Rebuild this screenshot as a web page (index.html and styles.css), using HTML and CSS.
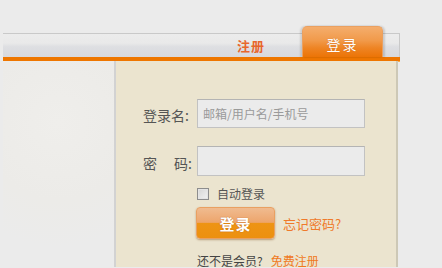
FILE: index.html
```html
<!DOCTYPE html>
<html lang="zh-CN">
<head>
<meta charset="utf-8">
<title>登录</title>
<link rel="stylesheet" href="styles.css">
</head>
<body>
<div class="page">
  <div class="bar">
    <a class="reg-link" href="#">注册</a>
    <div class="tab">登录</div>
  </div>
  <div class="main">
    <div class="side"></div>
    <div class="panel">
      <div class="row">
        <label class="lbl">登录名:</label>
        <input class="field" type="text" placeholder="邮箱/用户名/手机号">
      </div>
      <div class="row row-pw">
        <label class="lbl">密<span class="sp"></span>码:</label>
        <input class="field" type="password">
      </div>
      <div class="row row-check">
        <input class="check" type="checkbox">
        <span class="check-text">自动登录</span>
      </div>
      <div class="row row-btn">
        <button class="btn">登录</button>
        <a class="forgot" href="#">忘记密码?</a>
      </div>
      <div class="row row-join">
        <span class="join-text">还不是会员?</span>
        <a class="join-link" href="#">免费注册</a>
      </div>
    </div>
  </div>
</div>
</body>
</html>
```
FILE: styles.css
```css
html, body {
  margin: 0;
  padding: 0;
  background: #ebebeb;
  font-family: "Noto Sans CJK SC", "Noto Sans", sans-serif;
}
.page {
  width: 397px;
  margin-left: 3px;
  padding-top: 33px;
}
.bar {
  height: 23px;
  border-top: 1px solid #c9c9c9;
  border-right: 1px solid #c9c9c9;
  background: linear-gradient(#ececec 0%, #e9e9e9 40%, #dedfe2 55%, #d8d9dd 100%);
  display: flex;
  justify-content: flex-end;
  align-items: flex-end;
}
.reg-link {
  align-self: center;
  margin-right: 37px;
  font-size: 13px;
  font-weight: bold;
  color: #e8662c;
  text-decoration: none;
  line-height: 16px;
  padding-top: 1px;
  letter-spacing: 1px;
}
.tab {
  width: 81px;
  height: 31px;
  margin-right: 16px;
  box-sizing: border-box;
  border: 1px solid #eaa060;
  border-bottom: none;
  border-radius: 5px 5px 0 0;
  background: linear-gradient(#f4ad6c 0%, #f19a4a 45%, #ee8424 70%, #ec7406 100%);
  box-shadow: -2px 0 2px rgba(0,0,0,0.12), 2px 0 2px rgba(0,0,0,0.14);
  color: #fff;
  font-size: 14px;
  text-align: center;
  line-height: 30px;
  padding-top: 2px;
  letter-spacing: 2px;
  text-shadow: 0 0 1px rgba(160,70,0,0.5);
}
.main {
  display: flex;
  border-top: 4px solid #ee7600;
  box-shadow: inset 0 1px 0 #f4b050;
  height: 206px;
}
.side {
  width: 111px;
  border-right: 2px solid #d2d2d2;
  background: radial-gradient(circle at 50% 30%, #efeeeb 0%, #ecebe8 50%, #ebebeb 80%);
}
.panel {
  width: 282px;
  border-right: 2px solid #cdc8b6;
  background: #ebe4cf;
  padding-top: 38px;
  box-sizing: border-box;
}
.row {
  display: flex;
  align-items: center;
  padding-left: 81px;
}
.row:first-child, .row-pw {
  padding-left: 27px;
}
.lbl {
  width: 54px;
  font-size: 14px;
  color: #555;
  padding-top: 3px;
  white-space: nowrap;
}
.sp {
  display: inline-block;
  width: 17px;
}
.field {
  width: 168px;
  height: 29px;
  box-sizing: border-box;
  margin: 0;
  border: 1px solid #c2c2c2;
  border-top-color: #b4b4b4;
  background: #ebebeb;
  padding: 0 5px;
  font-family: "Noto Sans CJK SC", "Noto Sans", sans-serif;
  font-size: 12px;
  color: #333;
  outline: none;
}
.field::placeholder {
  color: #9a9a9a;
}
.row-pw {
  margin-top: 18px;
}
.row-pw .field {
  height: 30px;
}
.row-check {
  margin-top: 11px;
}
.check {
  appearance: none;
  -webkit-appearance: none;
  margin: 0;
  width: 12px;
  height: 12px;
  box-sizing: border-box;
  border: 1px solid #8d8d8d;
  background: linear-gradient(135deg, #d6d6d6, #f2f2f2);
  box-shadow: inset 0 0 0 1px #e4e4e4;
}
.check-text {
  margin-left: 8px;
  font-size: 12px;
  color: #555;
  line-height: 14px;
}
.row-btn {
  margin-top: 6px;
  padding-left: 80px;
}
.btn {
  width: 79px;
  height: 32px;
  box-sizing: border-box;
  margin: 0;
  border: 1px solid #e9a062;
  border-radius: 4px;
  background: linear-gradient(#f0bb90 0%, #eda56c 48%, #ee9414 50%, #ec9010 100%);
  box-shadow: 0 1px 2px rgba(120,70,20,0.45);
  color: #fff;
  font-family: "Noto Sans CJK SC", "Noto Sans", sans-serif;
  font-size: 15px;
  font-weight: bold;
  text-shadow: 0 0 1px rgba(150,60,0,0.8);
  letter-spacing: 1px;
  padding: 0;
}
.forgot {
  margin-left: 8px;
  font-size: 13px;
  color: #ef7a2a;
  text-decoration: none;
}
.row-join {
  margin-top: 14px;
  line-height: 16px;
}
.join-text {
  font-size: 12px;
  color: #444;
}
.join-link {
  margin-left: 8px;
  font-size: 12px;
  color: #f07a1e;
  text-decoration: none;
}
```
